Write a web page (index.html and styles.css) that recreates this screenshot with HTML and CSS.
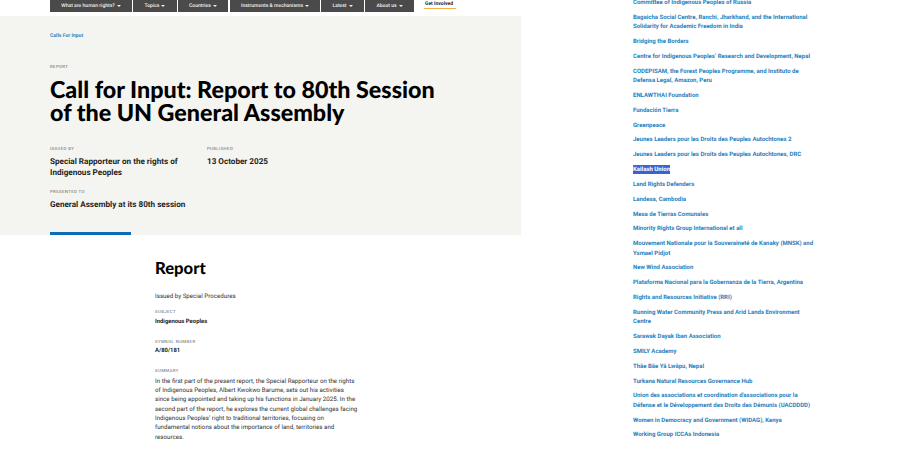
FILE: index.html
```html
<!DOCTYPE html>
<html lang="en">
<head>
  <meta charset="utf-8">
  <title>Call for Input: Report to 80th Session of the UN General Assembly</title>
  <link rel="stylesheet" href="styles.css">
</head>
<body>
  <div class="page">
    <div class="main">
      <div class="topbar">
        <ul class="nav">
          <li class="nav-item nav-rights">What are human rights? <span class="caret"></span></li>
          <li class="nav-item nav-topics">Topics <span class="caret"></span></li>
          <li class="nav-item nav-countries">Countries <span class="caret"></span></li>
          <li class="nav-item nav-instruments">Instruments &amp; mechanisms <span class="caret"></span></li>
          <li class="nav-item nav-latest">Latest <span class="caret"></span></li>
          <li class="nav-item nav-about">About us <span class="caret"></span></li>
        </ul>
        <a class="get-involved">Get Involved</a>
      </div>

      <div class="hero">
        <a class="breadcrumb">Calls For Input</a>
        <div class="kicker">REPORT</div>
        <h1>Call for Input: Report to 80th Session of the UN General Assembly</h1>
        <div class="meta-row">
          <div class="meta-issued">
            <div class="label">ISSUED BY</div>
            <div class="value">Special Rapporteur on the rights of Indigenous Peoples</div>
          </div>
          <div>
            <div class="label">PUBLISHED</div>
            <div class="value">13 October 2025</div>
          </div>
        </div>
        <div class="meta-presented">
          <div class="label">PRESENTED TO</div>
          <div class="value">General Assembly at its 80th session</div>
        </div>
        <div class="hero-bar"></div>
      </div>

      <div class="report">
        <h2>Report</h2>
        <p class="issued">Issued by Special Procedures</p>
        <div class="small-label">SUBJECT</div>
        <div class="strong-value">Indigenous Peoples</div>
        <div class="small-label">SYMBOL NUMBER</div>
        <div class="strong-value">A/80/181</div>
        <div class="small-label">SUMMARY</div>
        <p class="summary">In the first part of the present report, the Special Rapporteur on the rights of Indigenous Peoples, Albert Kwokwo Barume, sets out his activities since being appointed and taking up his functions in January 2025. In the second part of the report, he explores the current global challenges facing Indigenous Peoples’ right to traditional territories, focusing on fundamental notions about the importance of land, territories and resources.</p>
      </div>
    </div>

    <ul class="orgs">
      <li>Committee of Indigenous Peoples of Russia</li>
      <li>Bagaicha Social Centre, Ranchi, Jharkhand, and the International Solidarity for Academic Freedom in India</li>
      <li>Bridging the Borders</li>
      <li>Centre for Indigenous Peoples’ Research and Development, Nepal</li>
      <li>CODEPISAM, the Forest Peoples Programme, and Instituto de Defensa Legal, Amazon, Peru</li>
      <li>ENLAWTHAI Foundation</li>
      <li>Fundación Tierra</li>
      <li>Greenpeace</li>
      <li>Jeunes Leaders pour les Droits des Peuples Autochtones 2</li>
      <li>Jeunes Leaders pour les Droits des Peuples Autochtones, DRC</li>
      <li><span class="selected">Kailash Union</span></li>
      <li>Land Rights Defenders</li>
      <li>Landesa, Cambodia</li>
      <li>Mesa de Tierras Comunales</li>
      <li>Minority Rights Group International et all</li>
      <li>Mouvement Nationale pour la Souveraineté de Kanaky (MNSK) and Ysmael Pidjot</li>
      <li>New Wind Association</li>
      <li>Plataforma Nacional para la Gobernanza de la Tierra, Argentina</li>
      <li>Rights and Resources Initiative (RRI)</li>
      <li>Running Water Community Press and Arid Lands Environment Centre</li>
      <li>Sarawak Dayak Iban Association</li>
      <li>SMILY Academy</li>
      <li>Thāe Bāe Yā Lwāpu, Nepal</li>
      <li>Turkana Natural Resources Governance Hub</li>
      <li>Union des associations et coordination d'associations pour la Défense et le Développement des Droits des Démunis (UACDDDD)</li>
      <li>Women in Democracy and Government (WIDAG), Kenya</li>
      <li>Working Group ICCAs Indonesia</li>
    </ul>
  </div>
</body>
</html>
```

FILE: styles.css
```css
html, body {
  margin: 0;
  padding: 0;
  height: 450px;
  overflow: hidden;
  background-color: #fff;
}

body {
  font-family: Roboto, "Liberation Sans", sans-serif;
  color: #222;
  text-rendering: geometricPrecision;
}

ul {
  list-style: none;
  margin: 0;
  padding: 0;
}

.page {
  display: flex;
  align-items: flex-start;
}

.main {
  width: 521px;
  flex: none;
}

.topbar {
  display: flex;
  height: 16px;
  padding-left: 50px;
}

.nav {
  display: flex;
  gap: 1px;
  height: 12px;
}

.nav-item {
  display: flex;
  align-items: center;
  justify-content: center;
  gap: 2px;
  background-color: #4a4a4a;
  color: #f0f0f0;
  font-size: 5.05px;
  font-weight: 500;
}

.nav-rights { width: 82px; }
.nav-topics { width: 44px; }
.nav-countries { width: 50px; margin-right: 1px; }
.nav-instruments { width: 90px; }
.nav-latest { width: 43px; }
.nav-about { width: 49px; }

.caret {
  width: 0;
  height: 0;
  border-left: 2px solid transparent;
  border-right: 2px solid transparent;
  border-top: 2.5px solid #f0f0f0;
}

.get-involved {
  align-self: flex-start;
  margin-left: 10px;
  padding: 1px 1px 0;
  height: 7px;
  line-height: 7px;
  width: 30px;
  font-size: 5px;
  font-weight: 700;
  white-space: nowrap;
  color: #222;
  border-bottom: 1px solid #f6b04d;
}

.hero {
  box-sizing: border-box;
  height: 219px;
  padding: 16px 50px 0;
  background-color: #f4f4f0;
  display: flex;
  flex-direction: column;
}

.breadcrumb {
  height: 8px;
  line-height: 8px;
  font-size: 5.1px;
  font-weight: 700;
  color: #2b86c5;
}

.kicker {
  margin-top: 25px;
  height: 6px;
  line-height: 6px;
  font-size: 4.3px;
  letter-spacing: 0.4px;
  color: #666;
}

h1 {
  margin: 7px 0 0;
  width: 400px;
  font-family: Lato, sans-serif;
  font-size: 23.3px;
  font-weight: 900;
  line-height: 23px;
  color: #000;
}

.meta-row {
  display: flex;
  margin-top: 22.5px;
}

.meta-issued {
  width: 157px;
  flex: none;
}

.label {
  height: 6px;
  line-height: 6px;
  margin-bottom: 3px;
  font-size: 4.3px;
  letter-spacing: 0.4px;
  color: #666;
}

.value {
  width: 135px;
  font-size: 8.15px;
  font-weight: 700;
  line-height: 11.2px;
  color: #1f1f1f;
}

.meta-presented {
  margin-top: 12.5px;
}

.meta-presented .value {
  width: auto;
}

.hero-bar {
  margin-top: auto;
  width: 81px;
  height: 3px;
  background-color: #0d6cb8;
}

.report {
  width: 203px;
  padding: 23px 0 0 155px;
}

h2 {
  margin: 0;
  font-family: Lato, sans-serif;
  font-size: 16.6px;
  font-weight: 900;
  line-height: 20px;
  color: #000;
}

.issued {
  margin: 14px 0 0;
  font-size: 6.2px;
  line-height: 9.3px;
  color: #333;
}

.small-label {
  margin-top: 9px;
  height: 6px;
  line-height: 6px;
  font-size: 4.3px;
  letter-spacing: 0.4px;
  color: #666;
}

.strong-value {
  margin-top: 1.5px;
  margin-bottom: 12.5px;
  font-size: 5.9px;
  font-weight: 700;
  line-height: 9.3px;
  color: #222;
}

.summary {
  margin: 2px 0 0;
  font-size: 6.2px;
  line-height: 9.3px;
  color: #333;
}

.orgs {
  width: 185px;
  margin-left: 112px;
  margin-top: -2px;
  display: flex;
  flex-direction: column;
  gap: 5.55px;
  font-size: 6px;
  font-weight: 700;
  line-height: 9.3px;
  color: #1f7fc0;
}

.selected {
  display: inline-block;
  background-color: #3b62d0;
  color: #fff;
}
```
